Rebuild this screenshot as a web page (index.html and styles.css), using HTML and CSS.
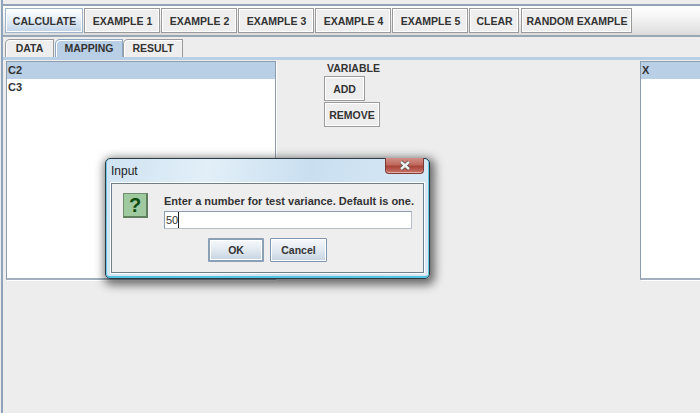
FILE: index.html
```html
<!DOCTYPE html>
<html lang="en">
<head>
<meta charset="utf-8">
<title>Mapping</title>
<link rel="stylesheet" href="styles.css">
</head>
<body>
<div class="app">
  <div class="toolbar">
    <button class="btn w78 primary">CALCULATE</button>
    <button class="btn w76">EXAMPLE 1</button>
    <button class="btn w76">EXAMPLE 2</button>
    <button class="btn w76">EXAMPLE 3</button>
    <button class="btn w76">EXAMPLE 4</button>
    <button class="btn w76">EXAMPLE 5</button>
    <button class="btn w51">CLEAR</button>
    <button class="btn w111">RANDOM EXAMPLE</button>
  </div>
  <div class="tabs">
    <div class="tab t-data">DATA</div>
    <div class="tab t-map active">MAPPING</div>
    <div class="tab t-res">RESULT</div>
  </div>
  <div class="panel">
    <div class="list">
      <div class="row sel">C2</div>
      <div class="row">C3</div>
    </div>
    <div class="mid">
      <div class="var">VARIABLE</div>
      <button class="mbtn w-add">ADD</button>
      <button class="mbtn w-rem">REMOVE</button>
    </div>
    <div class="list right">
      <div class="row sel">X</div>
    </div>
  </div>
</div>

<div class="dialog">
  <div class="titlebar">
    <span class="title">Input</span>
    <div class="close">
      <svg width="16" height="11" viewBox="0 0 16 11"><path d="M4 2 L12 9 M12 2 L4 9" stroke="#5a4a4a" stroke-width="4" fill="none"/><path d="M4 2 L12 9 M12 2 L4 9" stroke="#eef0f0" stroke-width="2.4" fill="none"/></svg>
    </div>
  </div>
  <div class="dbody">
    <div class="qicon">?</div>
    <div class="dmain">
      <div class="msg">Enter a number for test variance. Default is one.</div>
      <div class="input"><span>50</span><i class="caret"></i></div>
      <div class="actions">
        <button class="dbtn ok">OK</button>
        <button class="dbtn cancel">Cancel</button>
      </div>
    </div>
  </div>
</div>
</body>
</html>
```
FILE: styles.css
```css
* { box-sizing: border-box; }
html, body { margin: 0; padding: 0; }
body {
  width: 700px; height: 413px; overflow: hidden; position: relative;
  background: #ededed;
  font-family: "Liberation Sans", Arial, sans-serif;
  color: #333;
}
.app { margin-left: 1px; padding-top: 4px; height: 413px; border-left: 2px solid #8fa3bb; }
button { font-family: inherit; margin: 0; cursor: default; }

.toolbar {
  height: 33px;
  border-top: 2px solid #93a3b5;
  border-bottom: 2px solid #98a6b5;
  background: linear-gradient(#ffffff, #f4f4f4 40%, #dcdcdc);
  display: flex; align-items: flex-start; gap: 0;
  padding: 2px 0 0 2px;
}
.btn {
  height: 25px; padding: 0 0 0 1px;
  border: 1px solid #9a9a9a;
  box-shadow: inset 0 0 0 1px #fff;
  background: #eeeeee;
  font-size: 10.5px; font-weight: bold; color: #333;
  flex: none; margin-right: 1px;
}
.w78 { width: 78px; }
.w76 { width: 76px; }
.w51 { width: 50px; margin-right: 2px; }
.w111 { width: 111px; }
.primary {
  border-color: #9fb4cc;
  background: linear-gradient(#ffffff, #dfe9f4 55%, #c0d3e8);
}

.tabs {
  display: flex; align-items: flex-end;
  padding-left: 2px;
  border-bottom: 3px solid #b8cfe5;
  margin-bottom: 1px;
  box-sizing: content-box;
  height: 18px;
  padding-top: 2px;
}
.tab {
  height: 18px; border: 1px solid #9a9a9a; border-bottom: 0;
  border-radius: 5px 1px 0 0;
  background: #eeeeee; font-size: 10.5px; font-weight: bold; color: #333;
  text-align: center; line-height: 16px;
  box-shadow: inset 1px 1px 0 #fff;
}
.t-data { width: 49px; }
.t-map { width: 68px; background: #b8cfe5; border-color: #8da7c2; margin-left: 1px; }
.t-res { width: 60px; }

.panel {
  display: grid; grid-template-columns: 270px 364px 1fr;
  height: 220px; padding-left: 3px;
  box-sizing: content-box;
}
.list {
  background: #fff; height: 219px;
  border: 1px solid #8e9dad; border-bottom: 2px solid #a3afbd;
  box-shadow: 1px 1px 0 #fff;
}
.right { border-right: 0; }
.row { height: 17px; font-size: 11px; line-height: 17px; padding-left: 1px; font-weight: bold; color: #333; }
.sel { background: #b8cfe5; }

.mid { padding: 1px 0 0 48px; display: flex; flex-direction: column; align-items: flex-start; }
.var { font-size: 10.5px; font-weight: bold; height: 13px; line-height: 13px; margin-left: 3px; margin-bottom: 1px; }
.mbtn {
  height: 25px; border: 1px solid #9a9a9a; box-shadow: inset 0 0 0 1px #fff;
  background: #eeeeee; font-size: 10.5px; font-weight: bold; color: #333; padding: 0;
  margin-bottom: 1px;
}
.w-add { width: 41px; }
.w-rem { width: 56px; }

.dialog {
  position: absolute; left: 105px; top: 158px; width: 325px; height: 121px;
  border-radius: 5px;
  background: linear-gradient(100deg, #cfe3f2, #e2eff8 30%, #c9dff0 60%, #d9e9f5);
  border: 1px solid #2c3a42;
  box-shadow: inset 1px 0 0 #6cc9e6, inset -1px 0 0 #6cc9e6, inset 0 -2px 0 #55c2e4, 2px 3px 10px 3px rgba(0,0,0,.55);
  padding: 0 5px 5px;
  display: flex; flex-direction: column;
}
.titlebar { height: 24px; position: relative; flex: none; }
.title { font-size: 12px; color: #1c1c1c; position: relative; top: 5px; display: block; }
.close {
  position: absolute; right: 0; top: -1px; width: 39px; height: 16px;
  border: 1px solid #7e3a34; border-top: 0; border-radius: 0 0 4px 4px;
  background: linear-gradient(#d09088, #c0685c 45%, #a8443a 55%, #c87468);
  box-shadow: inset 0 -1px 0 #e2b0a8;
  display: flex; align-items: center; justify-content: center;
}
.dbody {
  flex: 1; background: #eeeeee; border: 1px solid #6d7f8c;
  box-shadow: 0 0 0 1px #fff;
  display: flex; padding: 9px 0 0 11px;
}
.qicon {
  width: 25px; height: 25px; flex: none;
  background: #9fc99f; border: 1px solid #6f8f6f; border-bottom: 2px solid #5f7f5f; border-right: 2px solid #5f7f5f;
  color: #0f4a0f; font-size: 20px; font-weight: bold; line-height: 23px; text-align: center;
}
.dmain { margin-left: 16px; width: 250px; }
.msg { font-size: 11px; font-weight: bold; height: 14px; line-height: 14px; margin-top: 1px; margin-bottom: 3px; color: #333; white-space: nowrap; }
.input {
  width: 248px; height: 18px; background: #fff; border: 1px solid #8e9dad; border-right-color: #b5bfca; border-bottom-color: #b5bfca;
  font-size: 11px; line-height: 16px; padding-left: 1px; display: flex; color: #333;
}
.caret { display: block; width: 1px; height: 16px; background: #222; }
.actions { display: flex; gap: 6px; margin-top: 9px; padding-left: 44px; }
.dbtn {
  height: 24px; border: 1px solid #7d95ad; border-radius: 1px;
  background: linear-gradient(#f6f9fc, #dfe7ef 55%, #c5d3e2);
  font-size: 10.5px; font-weight: bold; color: #333; padding: 0;
  box-shadow: inset 0 0 0 1px #fff;
}
.ok { width: 56px; border-width: 2px; border-color: #8aa0b6; }
.cancel { width: 57px; }
```
